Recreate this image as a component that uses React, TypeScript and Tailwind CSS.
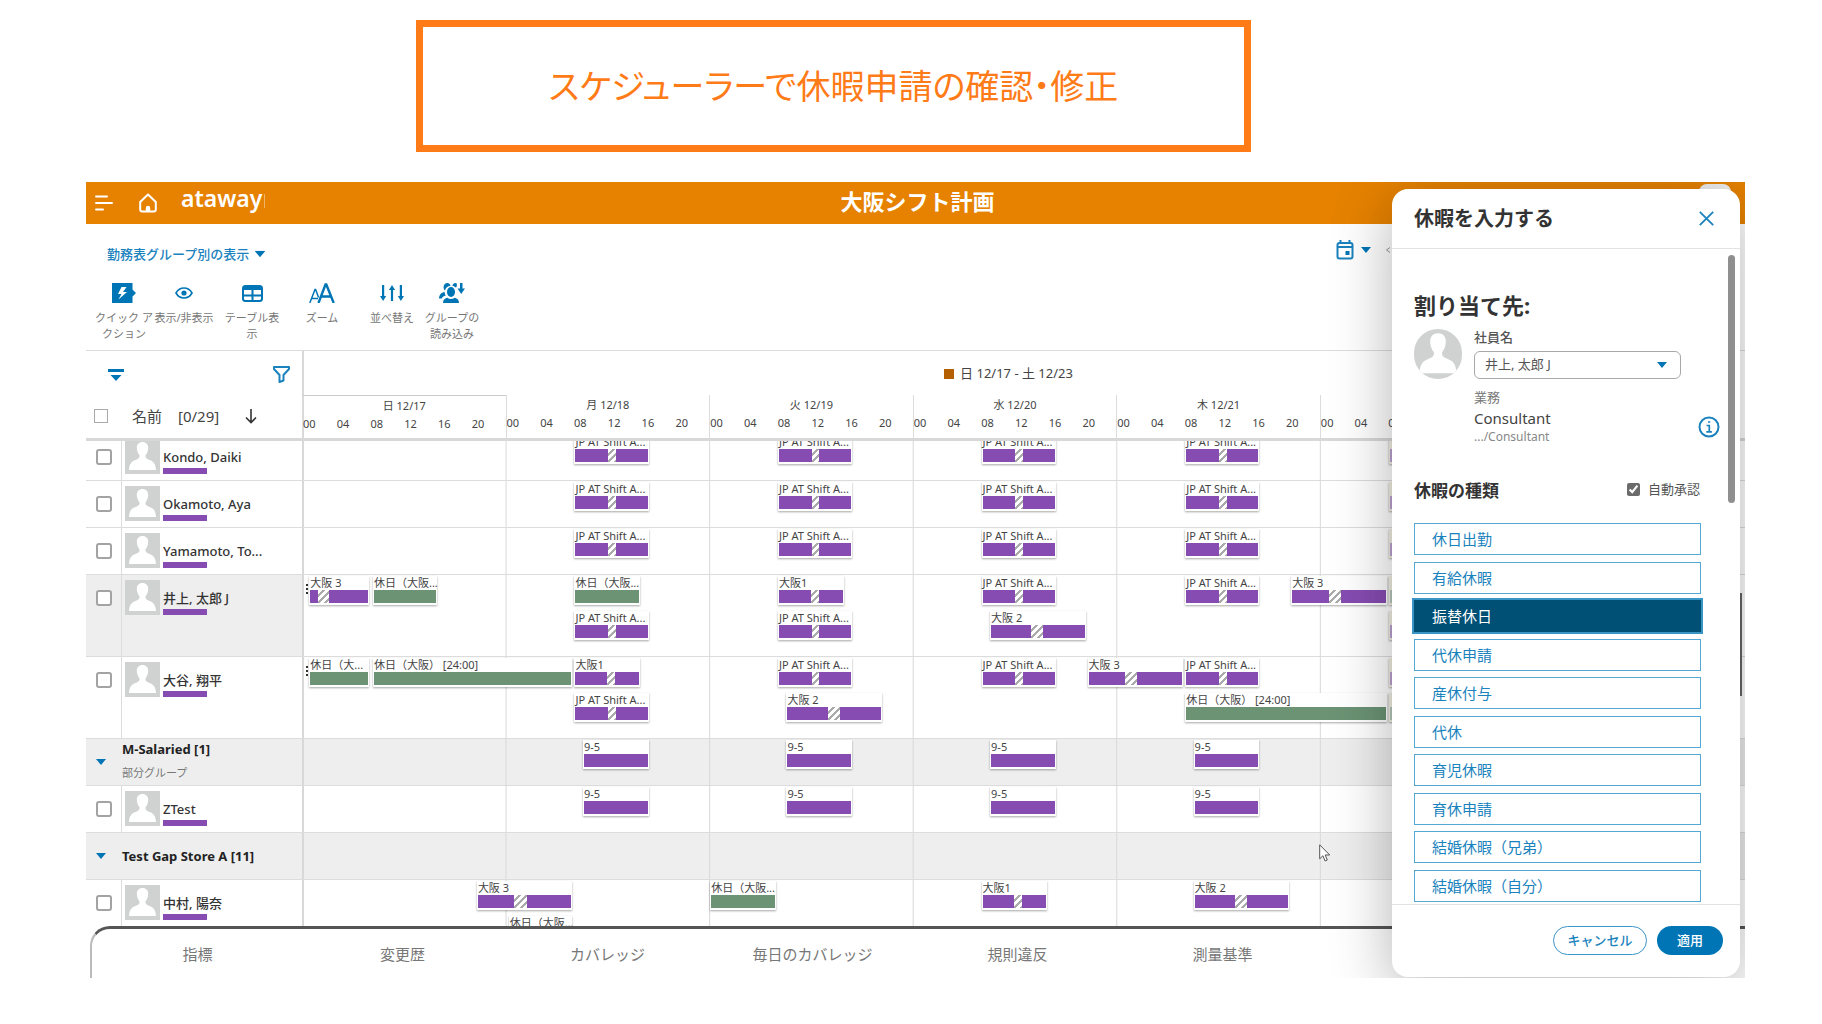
import { useState } from 'react';
import clsx from 'clsx';

type Shift = {
  label: string;
  start: number; // hours from Sunday 00:00
  end: number;
  lane?: number;
  kind?: 'work' | 'off' | 'faded' | 'fadedOff';
  rest?: [number, number]; // break start and length, percent of the bar
};

type Row = {
  id: string;
  name: string;
  group?: boolean;
  note?: string;
  selected?: boolean;
  tall?: boolean;
  more?: boolean;
  shifts: Shift[];
};

const DAYS = ['日 12/17', '月 12/18', '火 12/19', '水 12/20', '木 12/21', '金 12/22', '土 12/23'];
const HOURS = ['00', '04', '08', '12', '16', '20'];

const at = (day: number, hour: number) => day * 24 + hour;

const jp = (day: number, lane = 1): Shift => ({
  label: day === 5 ? '' : 'JP AT Shift A...',
  start: at(day, 8),
  end: at(day, 17),
  lane,
  kind: day === 5 ? 'faded' : 'work',
  rest: [45, 11],
});
const osaka1 = (day: number): Shift => ({ label: '大阪1', start: at(day, 8), end: at(day, 16), rest: [50, 12] });
const osaka2 = (day: number, lane = 1): Shift => ({ label: '大阪 2', start: at(day, 9), end: at(day, 20.5), lane, rest: [43, 13] });
const osaka3 = (day: number): Shift => ({ label: '大阪 3', start: at(day, 20.5), end: at(day + 1, 8), rest: [39, 13] });
const nineToFive = (day: number): Shift => ({ label: '9-5', start: at(day, 9), end: at(day, 17) });
const off = (label: string, start: number, end: number, lane = 1): Shift => ({ label, start, end, lane, kind: 'off' });

const weekdays = [1, 2, 3, 4, 5].map((d) => jp(d));

const ROWS: Row[] = [
  { id: 'kondo', name: 'Kondo, Daiki', shifts: weekdays },
  { id: 'okamoto', name: 'Okamoto, Aya', shifts: weekdays },
  { id: 'yamamoto', name: 'Yamamoto, To...', shifts: weekdays },
  {
    id: 'inoue',
    name: '井上, 太郎 J',
    selected: true,
    tall: true,
    more: true,
    shifts: [
      { label: '大阪 3', start: 0.75, end: 8, rest: [14, 18] },
      off('休日（大阪...', 8.25, 16),
      off('休日（大阪...', at(1, 8), at(1, 16)),
      jp(1, 2),
      osaka1(2),
      jp(2, 2),
      jp(3),
      osaka2(3, 2),
      jp(4),
      osaka3(4),
      { label: '', start: at(5, 8), end: at(5, 16), kind: 'fadedOff' },
      jp(5, 2),
    ],
  },
  {
    id: 'otani',
    name: '大谷, 翔平',
    tall: true,
    more: true,
    shifts: [
      off('休日（大...', 0.75, 8),
      off('休日（大阪） [24:00]', 8.25, 32),
      osaka1(1),
      jp(1, 2),
      jp(2),
      osaka2(2, 2),
      jp(3),
      osaka3(3),
      jp(4),
      off('休日（大阪） [24:00]', at(4, 8), at(5, 8), 2),
      jp(5),
      { label: '', start: at(5, 8), end: at(5, 16), lane: 2, kind: 'fadedOff' },
    ],
  },
  { id: 'salaried', name: 'M-Salaried [1]', group: true, note: '部分グループ', shifts: [1, 2, 3, 4].map(nineToFive) },
  { id: 'ztest', name: 'ZTest', shifts: [1, 2, 3, 4].map(nineToFive) },
  { id: 'gap', name: 'Test Gap Store A [11]', group: true, shifts: [] },
  {
    id: 'nakamura',
    name: '中村, 陽奈',
    tall: true,
    shifts: [
      osaka3(0),
      off('休日（大阪...', at(1, 0.25), at(1, 8), 2),
      off('休日（大阪...', at(2, 0), at(2, 8)),
      osaka1(3),
      osaka2(4),
    ],
  },
];

const LEAVE_TYPES = [
  '休日出勤',
  '有給休暇',
  '振替休日',
  '代休申請',
  '産休付与',
  '代休',
  '育児休暇',
  '育休申請',
  '結婚休暇（兄弟）',
  '結婚休暇（自分）',
];

const TABS = ['指標', '変更歴', 'カバレッジ', '毎日のカバレッジ', '規則違反', '測量基準'];

function Caret({ className }: { className?: string }) {
  return (
    <svg viewBox="0 0 10 6" className={clsx('h-1.5 w-2.5 fill-[#0075b5]', className)}>
      <path d="M0 0h10L5 6z" />
    </svg>
  );
}

function Person({ className }: { className?: string }) {
  return (
    <svg viewBox="0 0 35 35" preserveAspectRatio="none" className={clsx('shrink-0 bg-[#cfd2d1]', className)}>
      <path
        fill="#fff"
        d="M17.500 3c-3.600 0-5.800 2.400-5.700 6 .1 3.300 1.300 5.800 2.700 7.300.3 2.200-.6 3.300-2.900 4.200C7 22.300 4.500 23.600 4 31h27c-.5-7.400-3-8.700-7.600-10.500-2.300-.9-3.200-2-2.900-4.200 1.400-1.500 2.600-4 2.700-7.300C23.300 5.400 21.100 3 17.500 3z"
      />
    </svg>
  );
}

function ShiftCard({ shift }: { shift: Shift }) {
  const { label, start, end, lane = 1, kind = 'work', rest } = shift;
  const isOff = kind === 'off';
  const fill = isOff
    ? 'bg-[#6b9374]'
    : kind === 'faded'
      ? 'bg-[#bda2d3]'
      : kind === 'fadedOff'
        ? 'bg-[#b9c8bb]'
        : 'bg-[#864cb2]';
  const faded = kind === 'faded' || kind === 'fadedOff';

  return (
    <div
      className={clsx('mx-px flex h-[29px] min-w-0 flex-col px-px pb-0.5 shadow-[0_1px_2px_rgba(0,0,0,0.35)]', faded ? 'bg-[#f3efe2]' : 'bg-white')}
      style={{ gridColumn: `${start * 4 + 1} / ${end * 4 + 1}`, gridRow: lane }}
    >
      <span className="h-3.5 text-[11px] leading-3.5 whitespace-nowrap text-[#444]">{label}</span>
      <div className="flex h-[13px]">
        {rest && <span className={fill} style={{ width: `${rest[0]}%` }} />}
        {rest && (
          <span
            className="bg-[repeating-linear-gradient(135deg,#fff_0_3px,#aaa_3px_5px)]"
            style={{ width: `${rest[1]}%` }}
          />
        )}
        <span className={clsx('flex-1', fill)} />
      </div>
    </div>
  );
}

function ScheduleRow({ row }: { row: Row }) {
  return (
    <div className={clsx('flex border-b border-[#dcdcdc]', row.tall ? 'h-[82px]' : 'h-[47px]', row.group && 'bg-[#eee]')}>
      {row.group ? (
        <button type="button" className="flex w-[216px] shrink-0 items-center text-left">
          <Caret className="mx-2.5" />
          <span className="ml-1.5 flex flex-col gap-0.5">
            <span className="text-[13px] leading-5 font-bold text-[#222]">{row.name}</span>
            {row.note && <span className="text-[11px] leading-6 text-[#777]">{row.note}</span>}
          </span>
        </button>
      ) : (
        <div className={clsx('flex w-[216px] shrink-0', row.selected && 'bg-[#eee]')}>
          <div className="w-9 shrink-0 border-r border-[#dcdcdc] pt-[15px] pl-2.5">
            <input
              type="checkbox"
              aria-label={row.name}
              className="block size-4 appearance-none rounded-[3px] border-2 border-[#a3a3a3] bg-white"
            />
          </div>
          <div className="flex items-start gap-0.5 pt-[5px] pl-[3px]">
            <Person className="size-[35px]" />
            <div className="flex h-[35px] flex-col justify-end pl-px">
              <span className="text-[13px] leading-5 font-medium whitespace-nowrap text-[#333]">{row.name}</span>
              <span className="mt-px h-1.5 w-11 bg-[#864cb2]" />
            </div>
          </div>
        </div>
      )}
      <div className="min-w-0 flex-1 border-l-2 border-[#d8d8d8] pr-[18px]">
        <div className="-ml-0.5 grid h-full auto-rows-[35px] grid-cols-[repeat(672,minmax(0,1fr))] bg-[linear-gradient(to_right,#d8d8d8_1px,transparent_1px)] bg-[length:calc(100%/7)_100%] pt-px">
          {row.more && (
            <span className="col-start-3 col-end-5 row-start-1 mt-2 flex flex-col gap-0.5">
              <i className="size-0.5 bg-[#333]" />
              <i className="size-0.5 bg-[#333]" />
              <i className="size-0.5 bg-[#333]" />
            </span>
          )}
          {row.shifts.map((shift) => (
            <ShiftCard key={`${shift.start}-${shift.lane ?? 1}`} shift={shift} />
          ))}
        </div>
      </div>
    </div>
  );
}

function TopBar() {
  return (
    <header className="grid h-[42px] grid-cols-3 items-center bg-[#e68200] text-white">
      <div className="flex items-center">
        <button type="button" aria-label="メニュー" className="ml-[9px]">
          <svg viewBox="0 0 18 16" className="h-4 w-[18px] stroke-white stroke-2" strokeLinecap="round">
            <path d="M1 1.500h11M1 8h16M1 14.500h7" />
          </svg>
        </button>
        <button type="button" aria-label="ホーム" className="ml-[26px]">
          <svg viewBox="0 0 18 20" className="h-5 w-[18px] fill-none stroke-white stroke-2" strokeLinejoin="round">
            <path d="M1.200 9 9 1.500 16.800 9v7.500a2 2 0 0 1-2 2H3.200a2 2 0 0 1-2-2z" />
            <path fill="#fff" stroke="none" d="M6.800 18.500v-3.500a2.200 2.200 0 0 1 4.400 0v3.500z" />
          </svg>
        </button>
        <span className="ml-6 pb-2.5 text-[23px] leading-7 font-semibold">ataway</span>
        <span className="mb-1 ml-0.5 h-3.5 w-px bg-white/40" />
      </div>
      <h1 className="pb-1 pl-1 text-center text-[22px] leading-8 font-bold">大阪シフト計画</h1>
      <div className="flex h-full justify-end pt-0.5 pr-3.5">
        <span className="h-9 w-8 rounded-lg bg-[#eee]" />
      </div>
    </header>
  );
}

function ToolButton({ label, className, children }: { label: string; className: string; children: React.ReactNode }) {
  return (
    <button type="button" className={clsx('flex shrink-0 flex-col items-center gap-1.5 text-[11px] leading-4 text-[#777]', className)}>
      <span className="flex h-[22px] items-center text-[#0075b5]">{children}</span>
      <span className="whitespace-pre">{label}</span>
    </button>
  );
}

function Toolbar() {
  return (
    <div className="h-[127px] border-b border-[#dcdcdc]">
      <div className="flex h-10 items-end justify-between pr-[352px] pl-[21px]">
        <button type="button" className="flex items-center gap-1.5 text-[13px] leading-5 font-medium text-[#1a82bd]">
          勤務表グループ別の表示
          <Caret className="scale-110" />
        </button>
        <div className="flex items-center gap-3.5 pb-1">
          <button type="button" aria-label="カレンダー" className="flex items-center gap-[7px]">
            <svg viewBox="0 0 18 20" className="h-5 w-[18px] fill-none stroke-[#1a82bd] stroke-2">
              <rect x="1.500" y="3" width="15" height="15.500" rx="2" />
              <path d="M1.500 7h15M4.500 0v4M13.500 0v4" />
              <rect x="9.500" y="11" width="4" height="4" fill="#0075b5" stroke="none" />
            </svg>
            <Caret />
          </button>
          <svg viewBox="0 0 8 8" className="size-2 fill-none stroke-[#999]">
            <path d="M5 1.500 1.500 4 5 6.500" />
          </svg>
        </div>
      </div>
      <div className="flex items-start pt-[18px] pl-2">
        <ToolButton label={'クイック ア\nクション'} className="w-[60px]">
          <svg viewBox="0 0 24 20" className="h-5 w-6 fill-current">
            <path d="M0 0h20.500v6.500L24 10l-3.500 3.500V20H0z" />
            <path fill="#fff" d="m9.500 4-3.500 7h3.500L6.500 16.500 15 9h-4l3.500-5z" />
          </svg>
        </ToolButton>
        <ToolButton label="表示/非表示" className="w-[60px]">
          <svg viewBox="0 0 18 12" className="h-3 w-[18px] fill-none stroke-current" strokeWidth="1.600">
            <path d="M1 6c1.700-3.100 4.500-5 8-5s6.300 1.900 8 5c-1.700 3.100-4.500 5-8 5s-6.300-1.900-8-5z" />
            <circle cx="9" cy="6" r="2.600" fill="currentColor" stroke="none" />
          </svg>
        </ToolButton>
        <ToolButton label={'テーブル表\n示'} className="ml-2 w-[60px]">
          <svg viewBox="0 0 21 17" className="h-[17px] w-[21px] fill-none stroke-current stroke-2">
            <rect x="1" y="1" width="19" height="15" rx="2.500" />
            <path d="M1 3h19M1 10.500h19M10.500 4v12" />
            <path d="M1 4.500h19" strokeWidth="1" />
          </svg>
        </ToolButton>
        <ToolButton label="ズーム" className="ml-2.5 w-[60px]">
          <svg viewBox="0 0 26 20" className="h-5 w-[26px] fill-none stroke-current">
            <path strokeWidth="2.400" d="m9.500 20 7-18.500h.8L24.700 20M12 13.500h10" />
            <path strokeWidth="1.500" d="M.8 20 6 6.500h.6l3 8M2.600 15.500h6.400" />
          </svg>
        </ToolButton>
        <ToolButton label="並べ替え" className="ml-2.5 w-[60px]">
          <svg viewBox="0 0 24 16" className="h-4 w-6 fill-current">
            <path d="M2 0h2.200v11H6.200L3.100 16 0 11h2zM10.900 16h2.200V5h2L12 0 8.900 5h2zM19.800 0H22v11h2l-3.100 5-3.100-5h2z" />
          </svg>
        </ToolButton>
        <ToolButton label={'グループの\n読み込み'} className="w-[60px]">
          <svg viewBox="0 0 26 20" className="h-5 w-[26px] fill-current">
            <path d="M21 0h2.500v5.500H26L22.200 11 18.500 5.500H21z" />
            <ellipse cx="12" cy="9" rx="4" ry="5" />
            <path d="M4 20c0-3 1.500-4.700 4.300-5.300 1.100.8 2.400 1.200 3.700 1.200s2.600-.4 3.700-1.200C18.500 15.300 20 17 20 20z" />
            <path d="M11.500 2.800C11 1 9.900 0 8.400 0 6 0 4.600 1.900 4.600 4.200c0 1.300.5 2.500 1.300 3.400C6.500 4.900 8.700 3 11.500 2.800zM5.600 9C2.200 9.700.3 11.500 0 15.500h2.800c.7-1.600 2-2.500 3.900-2.900C6 11.500 5.600 10.300 5.600 9z" />
            <path d="M13.300 2.700C14 1 15 0 16.400 0c.7 0 1 .2 1.400.5v3l-1.500 1C15.500 3.400 14.500 2.900 13.300 2.700z" />
          </svg>
        </ToolButton>
      </div>
    </div>
  );
}

function TimelineHeader() {
  return (
    <div className="flex h-[90px] border-b-[3px] border-[#d8d8d8]">
      <div className="flex w-[216px] shrink-0 flex-col">
        <div className="flex items-center justify-between pt-[15px] pr-3 pl-[22px]">
          <button type="button" aria-label="すべて折りたたむ">
            <svg viewBox="0 0 16 12" className="h-3 w-4 fill-[#0075b5]">
              <path d="M0 0h16v3H0zM2.500 6h11L8 12z" />
            </svg>
          </button>
          <button type="button" aria-label="フィルター">
            <svg viewBox="0 0 17 17" className="size-[17px] fill-none stroke-[#1a82bd]" strokeWidth="2" strokeLinejoin="round">
              <path d="M1 1h15v2L10.500 9v5.500L6.500 16V9L1 3z" />
            </svg>
          </button>
        </div>
        <div className="flex items-center pt-[19px] pl-2 text-[15px] leading-7 text-[#444]">
          <input type="checkbox" aria-label="すべて選択" className="size-3.5 appearance-none border border-[#aaa] bg-white" />
          <span className="ml-6">名前</span>
          <span className="ml-4">[0/29]</span>
          <svg viewBox="0 0 12 15" className="ml-[26px] h-[15px] w-3 fill-none stroke-[#333]" strokeWidth="1.600">
            <path d="M6 0v13.500M1 8.500l5 5 5-5" />
          </svg>
        </div>
      </div>
      <div className="min-w-0 flex-1 border-l-2 border-[#d8d8d8] pr-[18px]">
        <div className="-ml-0.5">
          <div className="flex h-11 items-center justify-center gap-1.5 pt-0.5 pr-3 text-[13px] text-[#444]">
            <span className="size-2.5 bg-[#b45f00]" />
            日 12/17 - 土 12/23
          </div>
          <div className="grid grid-cols-7">
            {DAYS.map((day, i) => (
              <div key={day} className={clsx('h-[43px] border-l border-[#dcdcdc] text-[11px] text-[#444]', i === 0 && 'border-t border-t-[#ccc]')}>
                <div className="flex h-5 items-center justify-center gap-1">
                  {i === 5 && <span className="size-2.5 bg-[#b45f00]" />}
                  {day}
                </div>
                <div className="grid grid-cols-6 leading-4">
                  {HOURS.map((hour) => (
                    <span key={hour}>{hour}</span>
                  ))}
                </div>
              </div>
            ))}
          </div>
        </div>
      </div>
    </div>
  );
}

function LeavePanel() {
  const [selected, setSelected] = useState('振替休日');
  const [autoApprove, setAutoApprove] = useState(true);

  return (
    <aside className="absolute top-[7px] right-[5px] bottom-px flex w-[348px] flex-col rounded-2xl bg-white shadow-[0_12px_60px_rgba(0,0,0,0.3)]">
      <div className="flex h-[60px] items-center justify-between border-b border-[#e2e2e2] pr-[26px] pl-[22px]">
        <h2 className="text-[20px] leading-7 font-bold text-[#333]">休暇を入力する</h2>
        <button type="button" aria-label="閉じる">
          <svg viewBox="0 0 15 15" className="size-[15px] stroke-[#1a82bd]" strokeWidth="1.800">
            <path d="m.8.8 13.400 13.400M14.200.8.8 14.200" />
          </svg>
        </button>
      </div>

      <div className="flex min-h-0 flex-1 justify-between pr-[5px] pl-[22px]">
        <div className="flex w-[306px] flex-col pt-10">
          <h3 className="text-[22px] leading-8 font-bold text-[#333]">割り当て先:</h3>
          <div className="flex gap-3 pt-2">
            <Person className="h-[50px] w-12 rounded-full" />
            <div className="flex-1 text-[13px] text-[#555]">
              <label htmlFor="employee" className="block leading-4 font-medium">
                社員名
              </label>
              <div className="relative mt-1.5 w-[207px]">
                <select id="employee" className="h-7 w-full appearance-none rounded-md border border-[#a8a8a8] bg-white pl-2.5 text-[13px] text-[#555]">
                  <option>井上, 太郎 J</option>
                </select>
                <Caret className="pointer-events-none absolute top-[11px] right-3.5" />
              </div>
              <div className="flex items-center justify-between">
                <div>
                  <p className="mt-2 leading-5 text-[#777]">業務</p>
                  <p className="text-[15px] leading-[22px] text-[#444]">Consultant</p>
                  <p className="text-xs leading-4 text-[#888]">.../Consultant</p>
                </div>
                <svg viewBox="0 0 22 22" className="mt-[30px] size-[22px] fill-none stroke-[#1a82bd] stroke-2">
                  <circle cx="11" cy="11" r="9.500" />
                  <path d="M8.500 9.500h2.800v6M8.300 15.800h5.600M10 6h2.200" strokeWidth="1.700" />
                </svg>
              </div>
            </div>
          </div>
          <div className="flex items-start justify-between pt-8 pr-5">
            <h3 className="text-[17px] leading-7 font-bold text-[#333]">休暇の種類</h3>
            <label className="flex items-center gap-2 text-[13px] leading-6 text-[#555]">
              <input
                type="checkbox"
                checked={autoApprove}
                onChange={(e) => setAutoApprove(e.target.checked)}
                className="size-[13px] accent-[#6b6b6b]"
              />
              自動承認
            </label>
          </div>
          <div className="flex flex-1 flex-col justify-between pt-[18px] pr-[19px] pb-0.5">
            {LEAVE_TYPES.map((type) => (
              <button
                key={type}
                type="button"
                onClick={() => setSelected(type)}
                className={clsx(
                  'h-8 border pl-[17px] text-left text-[15px] leading-5',
                  type === selected
                    ? 'border-[#004f75] bg-[#004f75] text-white outline-2 outline-[#3a94c4]'
                    : 'border-[#55a8d3] bg-white text-[#1a82bd]',
                )}
              >
                {type}
              </button>
            ))}
          </div>
        </div>
        <span className="mt-1.5 h-[248px] w-[7px] rounded-full bg-[#8f8f8f]" />
      </div>

      <div className="flex h-[73px] shrink-0 items-start justify-end gap-2.5 border-t border-[#e2e2e2] pt-[21px] pr-[17px] text-[13px]">
        <button type="button" className="h-[29px] w-[94px] rounded-full border border-[#3a94c4] font-medium text-[#1a82bd]">
          キャンセル
        </button>
        <button type="button" className="h-[29px] w-[66px] rounded-full bg-[#0075b5] font-medium text-white">
          適用
        </button>
      </div>
    </aside>
  );
}

export default function App() {
  return (
    <div lang="ja" className="min-h-screen overflow-hidden bg-white pt-5 font-['Noto_Sans','Noto_Sans_CJK_JP',sans-serif]">
      <div className="ml-[416px] flex h-[132px] w-[835px] items-center justify-center border-[7px] border-[#ff7b17] text-[34px] text-[#ff7b17] [font-feature-settings:'palt']">
        スケジューラーで休暇申請の確認・修正
      </div>

      <main className="relative mt-[30px] mr-[77px] ml-[86px] overflow-hidden">
        <TopBar />
        <Toolbar />
        <TimelineHeader />
        <div className="h-[485px] overflow-hidden">
          <div className="-mt-[7px]">
            {ROWS.map((row) => (
              <ScheduleRow key={row.id} row={row} />
            ))}
          </div>
        </div>
        <nav className="ml-1 grid h-[52px] grid-cols-8 items-center rounded-tl-[20px] border-t-[3px] border-l-2 border-t-[#555] border-l-[#bbb] pr-2.5 pl-[3px] text-[15px] text-[#777]">
          {TABS.map((tab) => (
            <button key={tab} type="button" className="pt-0.5">
              {tab}
            </button>
          ))}
        </nav>

        <span className="absolute top-[411px] right-[3px] h-[103px] w-0.5 bg-[#666]" />
        <svg viewBox="0 0 12 18" className="absolute top-[662px] left-[1233px] h-[18px] w-3 fill-white stroke-[#555]">
          <path d="M.7.8v14l3.200-3 2.200 5.200 2.200-1L6.200 11h4.500z" />
        </svg>
        <LeavePanel />
      </main>
    </div>
  );
}
